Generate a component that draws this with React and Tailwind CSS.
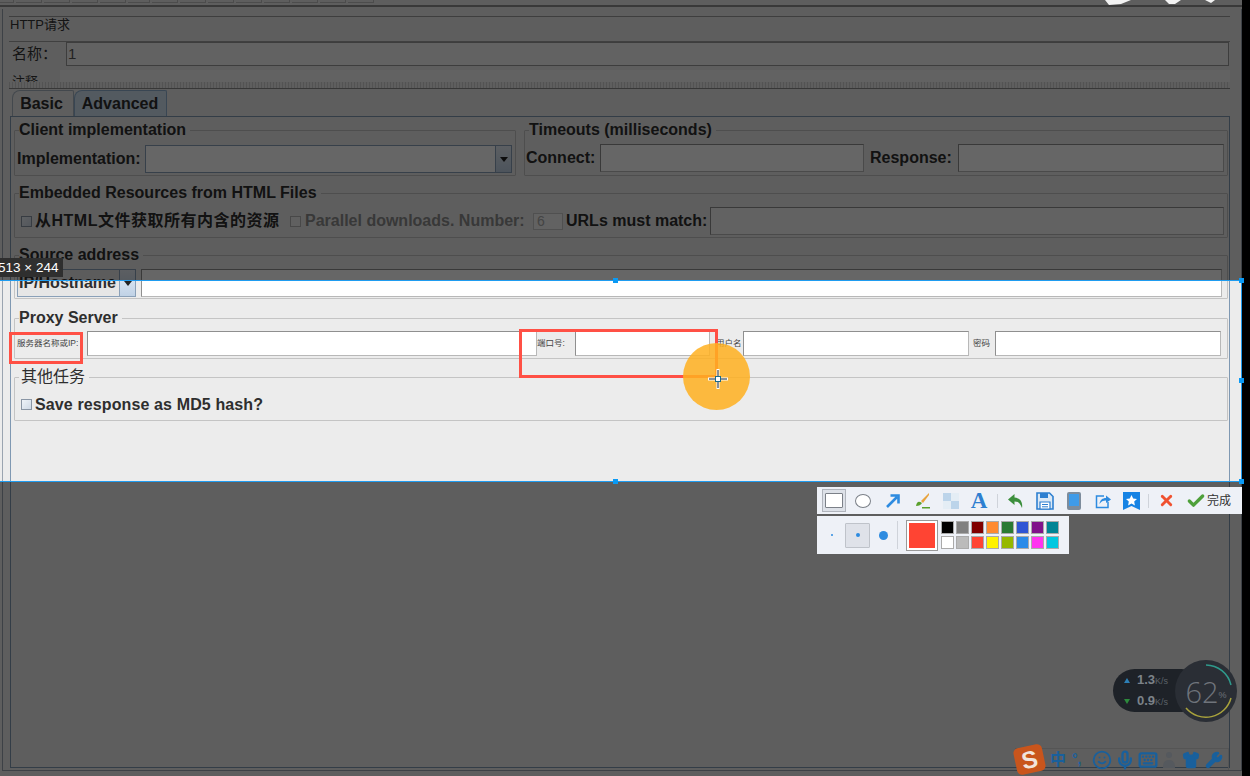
// JMeter HTTP request panel, seen through a screenshot tool's selection overlay
import { Smile, Mic, Keyboard, Shirt, Wrench, Check, X } from "lucide-react";

const CJK = "font-['Liberation_Sans','Noto_Sans_CJK_SC',sans-serif]";

const TOP_SWATCHES = ["#000000", "#808080", "#800000", "#ff8a30", "#2a7a33", "#2f55d4", "#80128a", "#008494"];
const BOTTOM_SWATCHES = ["#ffffff", "#bbbbbb", "#ff4433", "#fff200", "#95b800", "#2b8be8", "#ff33f0", "#00c8e0"];
const TOOLBAR_STUBS = [14, 26, 26, 26, 26, 22, 26, 26, 26, 26, 26, 26, 26, 26];

function Group({ title, serif, className = "", children }) {
  return (
    <fieldset className={`border border-[#c4c4c4] rounded-[1px] min-w-0 ${className}`}>
      <legend className={`ml-1 pr-1 h-5 leading-5 text-[16px] text-[#2e2e2e] ${serif ? "pl-[2px] font-normal" : "font-bold"}`}>
        {title}
      </legend>
      {children}
    </fieldset>
  );
}

function Field({ className = "" }) {
  return <div className={`bg-white border border-[#b8b8b8] border-t-[#8f8f8f] border-l-[#8f8f8f] ${className}`} />;
}

function Check14({ disabled }) {
  return (
    <span
      className={`w-[11px] h-[11px] border shrink-0 ${
        disabled ? "border-[#b4b4b4] bg-[#f0f0f0]" : "border-[#8a96a5] bg-gradient-to-br from-[#eef3f8] to-[#cfd9e6]"
      }`}
    />
  );
}

function ComboButton() {
  return (
    <div className="w-4 h-full flex items-center justify-center bg-gradient-to-b from-[#e6edf5] to-[#c0d2e6] border-l border-[#8aa0b8]">
      <span className="w-0 h-0 border-x-[4px] border-x-transparent border-t-[5px] border-t-[#222]" />
    </div>
  );
}

function SmallLabel({ className = "", children }) {
  return <span className={`text-[8.500px] text-[#444] shrink-0 whitespace-nowrap ${className}`}>{children}</span>;
}

function Tool({ children, className = "" }) {
  return <div className={`flex items-center justify-center ${className}`}>{children}</div>;
}

function CaptureToolbar() {
  return (
    <div className="absolute left-[817px] top-[487px] flex flex-col gap-[2px]">
      <div className="w-[425px] h-[27px] bg-[#eef1f7] flex items-center text-[#2d8be0]">
        <Tool className="ml-[5px] w-[24px] h-[23px] border border-[#b0b4bc] bg-[#dde1e8]">
          <span className="w-[18px] h-[15px] bg-white border border-[#7b8088] rounded-[1px]" />
        </Tool>
        <Tool className="ml-[9px] w-[16px]">
          <span className="w-[16px] h-[14px] bg-white border border-[#7b8088] rounded-[50%]" />
        </Tool>
        <Tool className="ml-[14px] w-[16px]">
          <svg width="16" height="16" viewBox="0 0 16 16"><path d="M2 14 12 4M5.500 2.500H13.500V10.500" fill="none" stroke="#2d8be0" strokeWidth="2.600" /></svg>
        </Tool>
        <Tool className="ml-[13px] w-[17px]">
          <svg width="17" height="17" viewBox="0 0 17 17"><path d="M15 1 7 9l2 2 6-8z" fill="#e8a33d" /><path d="M2 14c1-5 3-5 6-3-1 2-3 3-6 3z" fill="#5aa02c" /><path d="M8 15h8v1.500H8z" fill="#5aa02c" /></svg>
        </Tool>
        <Tool className="ml-[12px] w-[16px]">
          <svg width="16" height="16" viewBox="0 0 16 16"><path d="M0 0h8v8H0zM8 8h8v8H8z" fill="#bcd4ea" /><path d="M8 0h8v8H8zM0 8h8v8H0z" fill="#e4edf5" /></svg>
        </Tool>
        <span className="ml-[11px] w-[18px] text-center text-[23px] leading-none font-bold font-['Liberation_Serif',serif] text-[#2d7fd0]">A</span>
        <span className="ml-[9px] w-px h-[14px] bg-[#cfd3da]" />
        <svg className="ml-[9px]" width="17" height="16" viewBox="0 0 17 16">
          <path d="M7.500 1 1 6.500 7.500 12V8.500c3.500 0 5.500 1.500 7.500 6.500 1-6.500-2-10-7.500-10.500z" fill="#3c8f3c" />
        </svg>
        <svg className="ml-[12px]" width="18" height="18" viewBox="0 0 18 18">
          <path d="M1 1h12.500L17 4.500V17H1z" fill="#dbe8f5" stroke="#2d7fd0" strokeWidth="1.600" />
          <path d="M4 1h8v5H4z" fill="#2d7fd0" />
          <path d="M4 10h10v7H4z" fill="#fff" stroke="#2d7fd0" strokeWidth="1.200" />
          <path d="M6 12.500h6M6 14.800h6" stroke="#2d7fd0" />
        </svg>
        <Tool className="ml-[13px] w-[14px] h-[18px] bg-[#3f9be8] border-2 border-b-[4px] border-[#7d8c9c] rounded-[2px]" />
        <svg className="ml-[14px]" width="16" height="16" viewBox="0 0 16 16">
          <path d="M9 3H1.500v11.500H13V9" fill="none" stroke="#2d8be0" strokeWidth="1.500" />
          <path d="M4.500 11c.5-4 3-6 6.500-6V2.500L16 6.500 11 10V7.500c-3 0-5 1-6.500 3.500z" fill="#2d8be0" />
        </svg>
        <svg className="ml-[12px]" width="17" height="18" viewBox="0 0 17 18">
          <path d="M0 0h17v18l-8.500-4L0 18z" fill="#1683e4" />
          <path d="m8.500 3 1.700 3.500 3.800.5-2.800 2.600.7 3.800-3.400-1.900-3.400 1.900.7-3.800L3 7l3.800-.5z" fill="#fff" />
        </svg>
        <span className="ml-[8px] w-px h-[14px] bg-[#cfd3da]" />
        <X className="ml-[9px] text-[#f0512f]" size={17} strokeWidth={4} />
        <Check className="ml-[11px] text-[#4ea03a]" size={20} strokeWidth={4} />
        <span className={`ml-[1px] text-[12px] text-[#333] ${CJK}`}>完成</span>
      </div>
      <div className="w-[252px] h-[38px] bg-[#eef1f7] flex items-center">
        <span className="ml-[14px] w-[2px] h-[2px] rounded-full bg-[#2d8be0]" />
        <Tool className="ml-[12px] w-[25px] h-[25px] border border-[#bfc3ca] bg-[#dfe2e9] rounded-[1px]">
          <span className="w-[4px] h-[4px] rounded-full bg-[#2d8be0]" />
        </Tool>
        <span className="ml-[9px] w-[9px] h-[9px] rounded-full bg-[#2d8be0]" />
        <span className="ml-[9px] w-px h-[28px] bg-[#cfd3da]" />
        <span className="ml-[9px] w-[30px] h-[29px] bg-[#ff4433] border-[2px] border-white outline outline-1 outline-[#999]" />
        <div className="ml-[4px] grid grid-cols-8 gap-[2px]">
          {[...TOP_SWATCHES, ...BOTTOM_SWATCHES].map((c, i) => (
            <span key={i} className="w-[13px] h-[13px] border border-[#aaa]" style={{ backgroundColor: c }} />
          ))}
        </div>
      </div>
    </div>
  );
}

function NetWidget() {
  return (
    <div className="absolute left-[1113px] top-[660px] w-[124px] h-[62px]">
      <div className="absolute left-0 top-[9px] w-[90px] h-[43px] rounded-full bg-[#1e2228] text-[#7c8288] flex flex-col justify-center gap-[4px] pl-[11px]">
        <div className="flex items-center gap-[7px] text-[13px] leading-[15px] font-bold">
          <span className="w-0 h-0 border-x-[3px] border-x-transparent border-b-[5px] border-b-[#2d7fb5]" />
          <span>1.3<span className="text-[9px] font-normal text-[#5c6268]">K/s</span></span>
        </div>
        <div className="flex items-center gap-[7px] text-[13px] leading-[15px] font-bold">
          <span className="w-0 h-0 border-x-[3px] border-x-transparent border-t-[5px] border-t-[#2d8a3c]" />
          <span>0.9<span className="text-[9px] font-normal text-[#5c6268]">K/s</span></span>
        </div>
      </div>
      <div className="absolute left-[62px] top-0 w-[62px] h-[62px] rounded-full bg-[#2a2e35] flex items-center justify-center text-[#6f747b]">
        <svg className="absolute inset-0" width="62" height="62" viewBox="0 0 62 62">
          <path d="M31 5a26 26 0 0 1 25 20" fill="none" stroke="#2f9a8c" strokeWidth="1.500" />
          <path d="M56 38a26 26 0 0 1-45 10" fill="none" stroke="#a8a23c" strokeWidth="1.500" />
        </svg>
        <span className="text-[29px] leading-none font-['Open_Sans',sans-serif] font-light">62</span>
        <span className="text-[9px] mt-[10px]">%</span>
      </div>
    </div>
  );
}

function ImeBar() {
  return (
    <div className="absolute left-[1015px] top-[748px] w-[214px] h-[22px] border-t border-r border-[#555] flex items-center text-[#19609c]">
      <div className="w-[29px] h-[27px] rounded-[5px] -rotate-12 bg-[#c9551c] text-[#f1e4dc] text-[24px] leading-[27px] text-center font-bold shrink-0">S</div>
      <span className={`ml-[6px] text-[16px] font-bold ${CJK}`}>中</span>
      <span className="ml-[6px] text-[14px] font-bold">°,</span>
      <Smile className="ml-[10px]" size={20} strokeWidth={2.200} />
      <Mic className="ml-[3px]" size={20} strokeWidth={2.800} />
      <Keyboard className="ml-[3px]" size={20} strokeWidth={2.800} />
      <svg className="ml-[3px]" width="18" height="18" viewBox="0 0 18 18">
        <circle cx="8" cy="4" r="3" fill="#55595e" />
        <path d="M2 17c0-6 2-8 6-8s6 2 6 8z" fill="#55595e" />
      </svg>
      <Shirt className="ml-[3px]" size={18} fill="currentColor" />
      <Wrench className="ml-[5px]" size={18} fill="currentColor" />
    </div>
  );
}

function Panel() {
  return (
    <div className="mt-[2px] mb-[5px] flex-1 ml-[2px] border-l border-r border-b border-[#9aa4b0] pl-[6px] pr-[11px] pt-[7px] pb-[2px] flex flex-col min-h-0">
      {/* Title */}
      <div className="h-[25px] border-t border-[#9b9b9b] text-[13px] leading-[16px] pl-px text-[#333]">HTTP请求</div>
      {/* Name */}
      <div className="h-[26px] border-t border-[#a0a0a0] flex items-start">
        <span className="w-[57px] pl-[3px] text-[15px] leading-[24px] text-[#333]">名称：</span>
        <div className="flex-1 mr-px h-[24px] border border-[#999] bg-[#f6f6f6] text-[15px] leading-[22px] pl-px text-[#555]">1</div>
      </div>
      {/* Comment, cut off by the splitter */}
      <div className="h-[15px] overflow-hidden flex pl-[3px]">
        <span className="text-[13px] leading-[30px] text-[#333]">注释</span>
        <div className="ml-[22px] flex-1 h-[12px] mt-[3px] bg-[#f4f4f4]" />
      </div>
      <div className="h-[6px] bg-[repeating-linear-gradient(90deg,#cfcfcf_0,#cfcfcf_1px,#ececec_1px,#ececec_3px)]" />
      {/* Tabs */}
      <div className="h-[28px] border-t border-[#8a8a8a] flex items-end pl-[3px] pt-[1px]">
        <div className="w-[62px] h-[26px] border border-b-0 border-[#a8b4c0] rounded-tl-[8px] rounded-tr-[2px] pr-[3px] text-center text-[16px] leading-[26px] font-bold text-[#2e2e2e]">Basic</div>
        <div className="w-[93px] h-[26px] border border-b-0 border-[#8fb0d0] rounded-tl-[8px] rounded-tr-[2px] bg-[#cfe0f0] pr-px text-center text-[16px] leading-[26px] font-bold text-[#2e2e2e]">Advanced</div>
      </div>
      {/* Tab body */}
      <div className="flex-1 ml-px border border-[#7f98b2] pl-[3px] pr-px pt-[3px]">
        <div className="flex gap-2">
          <Group title="Client implementation" className="w-[502px]">
            <div className="flex items-center h-[28px] mt-[5px] mb-[2px] pl-[2px] pr-[3px]">
              <span className="w-[128px] text-[16px] font-bold text-[#2e2e2e]">Implementation:</span>
              <div className="flex-1 h-full bg-white border border-[#8aa0b8] flex justify-end">
                <ComboButton />
              </div>
            </div>
          </Group>
          <Group title="Timeouts (milliseconds)" className="flex-1">
            <div className="flex items-center h-[28px] mt-[4px] mb-[3px] pr-[3px]">
              <span className="w-[75px] text-[16px] pl-px font-bold text-[#2e2e2e]">Connect:</span>
              <Field className="w-[264px] h-full" />
              <span className="w-[94px] pl-[6px] text-[16px] font-bold text-[#2e2e2e]">Response:</span>
              <Field className="flex-1 h-full" />
            </div>
          </Group>
        </div>
        <Group title="Embedded Resources from HTML Files" className="mt-[7px]">
          <div className={`flex items-center h-[28px] mt-[4px] mb-[2px] pl-[6px] pr-[3px] text-[16px] font-bold text-[#2e2e2e] ${CJK}`}>
            <Check14 />
            <span className="ml-[3px] w-[255px] whitespace-nowrap tracking-[0.5px]">从HTML文件获取所有内含的资源</span>
            <Check14 disabled />
            <span className="ml-[4px] w-[228px] text-[#8c8c8c] whitespace-nowrap">Parallel downloads. Number:</span>
            <div className="w-[30px] h-[17px] bg-[#f4f4f4] border border-[#c8c8c8] text-[14px] leading-[15px] pl-[3px] font-normal text-[#aaa]">6</div>
            <span className="ml-[3px] w-[144px] whitespace-nowrap">URLs must match:</span>
            <Field className="flex-1 h-full !bg-[#f4f4f4]" />
          </div>
        </Group>
        <Group title="Source address" className="mt-[7px]">
          <div className="flex items-center h-[28px] gap-[5px] mt-[4px] mb-px pl-[2px] pr-[5px]">
            <div className="w-[119px] h-full flex border border-[#8aa0b8] bg-[#e6e6e6] text-[16px] font-bold text-[#2e2e2e]">
              <span className="flex-1 pl-px leading-[25px] whitespace-nowrap overflow-hidden">IP/Hostname</span>
              <ComboButton />
            </div>
            <Field className="flex-1 h-full" />
          </div>
        </Group>
        <Group title="Proxy Server" className="mt-[9px]">
          <div className={`flex items-center h-[25px] mt-[3px] mb-[2px] pl-[2px] pr-[6px] ${CJK}`}>
            <SmallLabel className="w-[70px]">服务器名称或IP:</SmallLabel>
            <Field className="w-[450px] h-full" />
            <SmallLabel className="w-[38px]">端口号:</SmallLabel>
            <Field className="w-[135px] h-full" />
            <SmallLabel className="w-[33px] pl-[6px]">用户名</SmallLabel>
            <Field className="w-[226px] h-full" />
            <SmallLabel className="w-[26px] pl-[4px]">密码</SmallLabel>
            <Field className="flex-1 h-full" />
          </div>
        </Group>
        <Group title={<span className={CJK}>其他任务</span>} serif className="mt-[8px]">
          <div className="flex items-center h-[27px] mt-[4px] mb-[2px] pl-[6px] text-[16px] font-bold text-[#2e2e2e]">
            <Check14 />
            <span className="ml-[3px] tracking-[0.12px]">Save response as MD5 hash?</span>
          </div>
        </Group>
      </div>
    </div>
  );
}

export default function App() {
  return (
    <div className={`relative w-[1250px] h-[776px] overflow-hidden bg-black ${CJK}`}>
      <div className="w-[1242px] h-full bg-[#ececec] flex flex-col">
        {/* Top of the JMeter toolbar, mostly scrolled out of the picture */}
        <div className="h-[5px] flex gap-[2px] overflow-hidden shrink-0">
          {TOOLBAR_STUBS.map((w, i) => (
            <span key={i} className="h-[3px] border-b border-r border-[#bdbdbd]" style={{ width: w }} />
          ))}
        </div>
        <div className="h-[2px] bg-[#8f8f8f] shrink-0" />
        <Panel />
      </div>

      {/* Dimmed areas around the selection */}
      <div className="absolute left-0 top-0 w-[1243px] h-[280px] bg-black/[0.6]" />
      <div className="absolute left-0 top-[482px] w-[1243px] h-[294px] bg-black/[0.6]" />

      {/* Scraps of the desktop at the very top */}
      <svg className="absolute left-[1100px] top-0" width="120" height="6" viewBox="0 0 120 6">
        <path d="M5 0h26l-10 4-12 1zM65 0h16l-6 4-6 0zM105 0h10l-4 3z" fill="#f2f2f2" />
      </svg>

      {/* Selection frame */}
      <div className="absolute left-[-1px] top-[280px] w-[1243px] h-[202px] border border-[#1f9cf0]" />
      {[[613, 278], [613, 479], [1239, 278], [1239, 378], [1239, 479]].map(([x, y], i) => (
        <span key={i} className="absolute w-[5px] h-[5px] bg-[#0a9af5]" style={{ left: x, top: y }} />
      ))}
      <div className="absolute left-0 top-[258px] w-[63px] h-[19px] bg-[#2f2f2f] overflow-hidden text-[13.500px] leading-[19px] text-white whitespace-nowrap">
        <span className="ml-[-2px]">513 × 244</span>
      </div>

      {/* Red annotation boxes */}
      <div className="absolute left-[9px] top-[332px] w-[74px] h-[32px] border-[3px] border-[#ff5045]" />
      <div className="absolute left-[519px] top-[329px] w-[199px] h-[49px] border-[3px] border-[#ff5045]" />

      {/* Mouse highlight and cursor */}
      <div className="absolute left-[683px] top-[343px] w-[67px] h-[67px] rounded-full bg-[#ffb020]/85" />
      <svg className="absolute left-[708px] top-[369px]" width="20" height="20" viewBox="0 0 20 20">
        <path d="M10 0v20M0 10h20" stroke="#fff" strokeWidth="3" />
        <path d="M10 1v18M1 10h18" stroke="#123" strokeWidth="1" />
        <rect x="7.500" y="7.500" width="5" height="5" fill="#fff" stroke="#1a6a8a" />
      </svg>

      <CaptureToolbar />
      <NetWidget />
      <ImeBar />
    </div>
  );
}
